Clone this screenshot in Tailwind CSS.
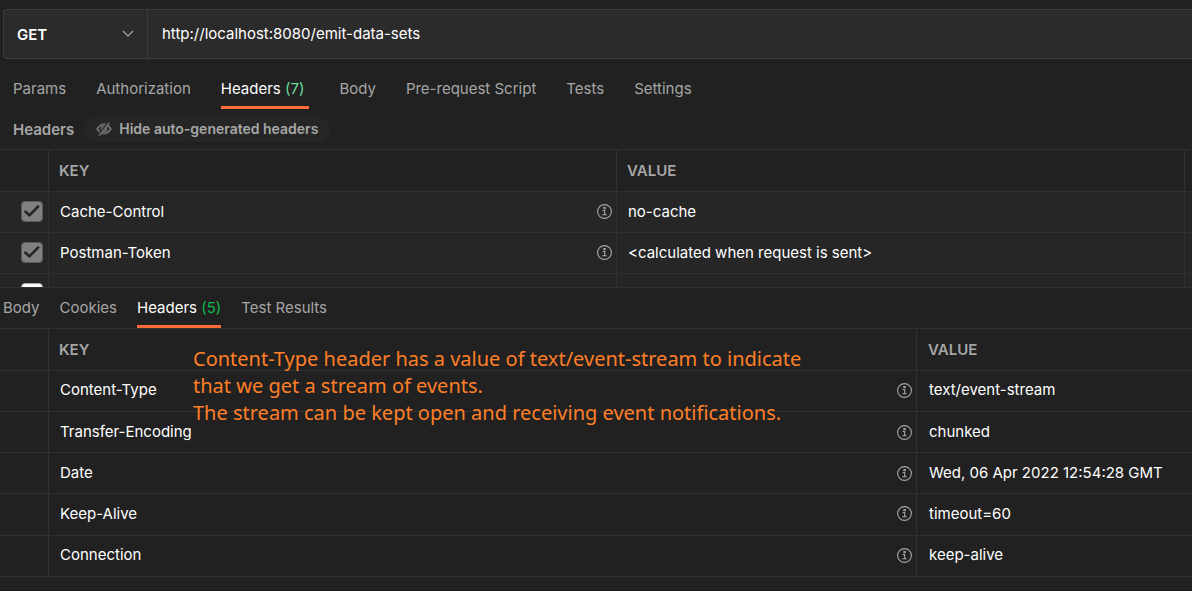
<!DOCTYPE html>
<html lang="en">
<head>
<meta charset="utf-8">
<title>Request headers</title>
<script src="https://cdn.jsdelivr.net/npm/@tailwindcss/browser@4"></script>
</head>
<body class="flex min-h-screen flex-col overflow-x-hidden border-b border-[#191919] bg-[#212121] font-[Inter,sans-serif] text-[15px] leading-5 text-white">
<svg class="hidden" aria-hidden="true">
  <symbol id="info" viewBox="0 0 15 15">
    <circle cx="7.5" cy="7.5" r="6.9" fill="none" stroke="currentColor" stroke-width="1.1"/>
    <path d="M6.9 3.5h1.3v1.3H6.9zM5.6 6.5h2.1v4.1M5.3 10.7h4.4" fill="none" stroke="currentColor" stroke-width="1.1"/>
  </symbol>
  <symbol id="tick" viewBox="0 0 21 21">
    <path d="M4 10.700l3.900 3.600 8.700-8.800" fill="none" stroke="#262626" stroke-width="2.6" stroke-linecap="round" stroke-linejoin="round"/>
  </symbol>
</svg>

<form class="mt-[9px] ml-[3px] flex h-[50px] rounded-l border border-r-0 border-[#3c3c3c] bg-[#2b2b2b]">
  <div class="relative w-36 shrink-0 border-r border-[#3c3c3c]">
    <select aria-label="Method" class="h-full w-full appearance-none bg-transparent pt-px pl-[13px] font-semibold text-white outline-none"><option>GET</option></select>
    <svg class="pointer-events-none absolute top-5 right-[13px] h-2 w-3" viewBox="0 0 12 8" fill="none" stroke="#a6a6a6" stroke-width="1.2"><path d="M1 1l5 5 5-5"/></svg>
  </div>
  <input aria-label="Request URL" type="text" value="http://localhost:8080/emit-data-sets" class="min-w-0 flex-1 bg-transparent pl-[14px] text-white outline-none">
</form>

<nav class="mt-5 flex gap-[30px] pl-[13px] text-[#a6a6a6]">
  <a href="#" class="h-[30px]">Params</a>
  <a href="#" class="h-[30px]">Authorization</a>
  <a href="#" class="h-[30px] border-b-3 border-[#ff6c37] pr-[5px] text-white">Headers <span class="text-[#6bdd9a]">(7)</span></a>
  <a href="#" class="h-[30px]">Body</a>
  <a href="#" class="h-[30px]">Pre-request Script</a>
  <a href="#" class="h-[30px]">Tests</a>
  <a href="#" class="h-[30px]">Settings</a>
</nav>

<section class="h-[179px] overflow-hidden border-b border-[#303030]">
  <div class="flex h-[41px] items-center gap-[10px] border-b border-[#303030] pl-[13px] font-semibold text-[#a6a6a6]">
    <h2 class="pt-px">Headers</h2>
    <button type="button" class="flex h-[25px] items-center gap-[7px] rounded-full bg-[#262626] px-3 text-sm">
      <svg class="h-4 w-4" viewBox="0 0 16 16" fill="none" stroke="#6f6f6f" stroke-width="1.8"><path d="M1.200 8c2-3.200 4.300-4.500 6.800-4.500S12.800 4.800 14.800 8c-2 3.200-4.300 4.500-6.800 4.500S3.200 11.200 1.200 8z"/><circle cx="8" cy="8" r="2.400"/><path d="M12.200 1.200L2.200 14.200" stroke="#262626" stroke-width="1.600"/><path d="M13.200 1.700L3.200 14.700" stroke-width="1.400"/></svg>
      Hide auto-generated headers
    </button>
  </div>
  <table class="w-full table-fixed border-separate border-spacing-0 text-left">
    <colgroup><col class="w-[49px]"><col><col><col class="w-[7px]"></colgroup>
    <thead class="text-[#a6a6a6]">
      <tr class="h-[42px]">
        <th class="border-r border-b border-[#303030] p-0"></th>
        <th class="border-r border-b border-[#303030] p-0 pl-[10px] font-semibold">KEY</th>
        <th class="border-r border-b border-[#303030] p-0 pl-[10px] font-semibold">VALUE</th>
        <th class="border-b border-[#303030] p-0"></th>
      </tr>
    </thead>
    <tbody class="bg-[#262626]">
      <tr class="h-[41px]">
        <td class="border-r border-b border-[#303030] p-0 pb-px"><label class="relative ml-[21px] block h-[21px] w-[22px]"><input type="checkbox" checked aria-label="Cache-Control" class="block h-full w-full appearance-none rounded border border-[#5a5a5a] bg-[#808080]"><svg class="pointer-events-none absolute inset-0 h-full w-full"><use href="#tick"/></svg></label></td>
        <td class="border-r border-b border-[#303030] p-0 pr-1 pb-px pl-[11px]"><div class="flex items-center justify-between">Cache-Control<svg class="h-[15px] w-[15px] text-[#a6a6a6]"><use href="#info"/></svg></div></td>
        <td class="border-r border-b border-[#303030] p-0 pb-px pl-[11px]">no-cache</td>
        <td class="border-b border-[#303030] p-0"></td>
      </tr>
      <tr class="h-[41px]">
        <td class="border-r border-b border-[#303030] p-0 pb-px"><label class="relative ml-[21px] block h-[21px] w-[22px]"><input type="checkbox" checked aria-label="Postman-Token" class="block h-full w-full appearance-none rounded border border-[#5a5a5a] bg-[#808080]"><svg class="pointer-events-none absolute inset-0 h-full w-full"><use href="#tick"/></svg></label></td>
        <td class="border-r border-b border-[#303030] p-0 pr-1 pb-px pl-[11px]"><div class="flex items-center justify-between">Postman-Token<svg class="h-[15px] w-[15px] text-[#a6a6a6]"><use href="#info"/></svg></div></td>
        <td class="border-r border-b border-[#303030] p-0 pb-px pl-[11px]">&lt;calculated when request is sent&gt;</td>
        <td class="border-b border-[#303030] p-0"></td>
      </tr>
      <tr class="h-[41px]">
        <td class="border-r border-b border-[#303030] p-0 pb-px"><input type="checkbox" aria-label="Include header" class="ml-[21px] block h-[21px] w-[22px] appearance-none rounded border border-[#a6a6a6] bg-white"></td>
        <td class="border-r border-b border-[#303030] p-0 pr-1"><svg class="ml-auto h-[15px] w-[15px] text-[#a6a6a6]"><use href="#info"/></svg></td>
        <td class="border-r border-b border-[#303030] p-0"></td>
        <td class="border-b border-[#303030] p-0"></td>
      </tr>
    </tbody>
  </table>
</section>

<nav class="flex h-[41px] gap-5 border-b border-[#303030] pt-[10px] pl-[3px] text-[#a6a6a6]">
  <a href="#">Body</a>
  <a href="#">Cookies</a>
  <a href="#" class="border-b-3 border-[#ff6c37] text-white">Headers <span class="text-[#0cbb52]">(5)</span></a>
  <a href="#">Test Results</a>
</nav>

<section class="relative">
  <table class="w-full table-fixed border-separate border-spacing-0 text-left">
    <colgroup><col class="w-[49px]"><col><col class="w-[275px]"></colgroup>
    <thead class="text-[#a6a6a6]">
      <tr class="h-[42px]">
        <th class="border-r border-b border-[#303030] p-0"></th>
        <th class="border-r border-b border-[#303030] p-0 pl-[10px] font-semibold">KEY</th>
        <th class="border-b border-[#303030] p-0 pl-[11px] font-semibold">VALUE</th>
      </tr>
    </thead>
    <tbody>
      <tr class="h-[41px]">
        <td class="border-r border-b border-[#303030] p-0"></td>
        <td class="border-r border-b border-[#303030] p-0 pr-1 pb-0.5 pl-[11px]"><div class="flex items-center justify-between">Content-Type<svg class="h-[15px] w-[15px] text-[#a6a6a6]"><use href="#info"/></svg></div></td>
        <td class="border-b border-[#303030] p-0 pb-0.5 pl-3">text/event-stream</td>
      </tr>
      <tr class="h-[41px]">
        <td class="border-r border-b border-[#303030] p-0"></td>
        <td class="border-r border-b border-[#303030] p-0 pr-1 pl-[11px]"><div class="flex items-center justify-between">Transfer-Encoding<svg class="h-[15px] w-[15px] text-[#a6a6a6]"><use href="#info"/></svg></div></td>
        <td class="border-b border-[#303030] p-0 pl-3">chunked</td>
      </tr>
      <tr class="h-[41px]">
        <td class="border-r border-b border-[#303030] p-0"></td>
        <td class="border-r border-b border-[#303030] p-0 pr-1 pl-[11px]"><div class="flex items-center justify-between">Date<svg class="h-[15px] w-[15px] text-[#a6a6a6]"><use href="#info"/></svg></div></td>
        <td class="border-b border-[#303030] p-0 pl-3">Wed, 06 Apr 2022 12:54:28 GMT</td>
      </tr>
      <tr class="h-[42px]">
        <td class="border-r border-b border-[#303030] p-0"></td>
        <td class="border-r border-b border-[#303030] p-0 pr-1 pb-0.5 pl-[11px]"><div class="flex items-center justify-between">Keep-Alive<svg class="h-[15px] w-[15px] text-[#a6a6a6]"><use href="#info"/></svg></div></td>
        <td class="border-b border-[#303030] p-0 pb-0.5 pl-3">timeout=60</td>
      </tr>
      <tr class="h-[41px]">
        <td class="border-r border-b border-[#303030] p-0"></td>
        <td class="border-r border-b border-[#303030] p-0 pr-1 pb-0.5 pl-[11px]"><div class="flex items-center justify-between">Connection<svg class="h-[15px] w-[15px] text-[#a6a6a6]"><use href="#info"/></svg></div></td>
        <td class="border-b border-[#303030] p-0 pb-0.5 pl-3">keep-alive</td>
      </tr>
    </tbody>
  </table>
  <p class="absolute top-4 left-[193px] font-['Noto_Sans',sans-serif] text-xl leading-[27px] whitespace-nowrap text-[#ff7f27]">Content-Type header has a value of text/event-stream to indicate<br>that we get a stream of events.<br>The stream can be kept open and receiving event notifications.</p>
</section>
</body>
</html>
